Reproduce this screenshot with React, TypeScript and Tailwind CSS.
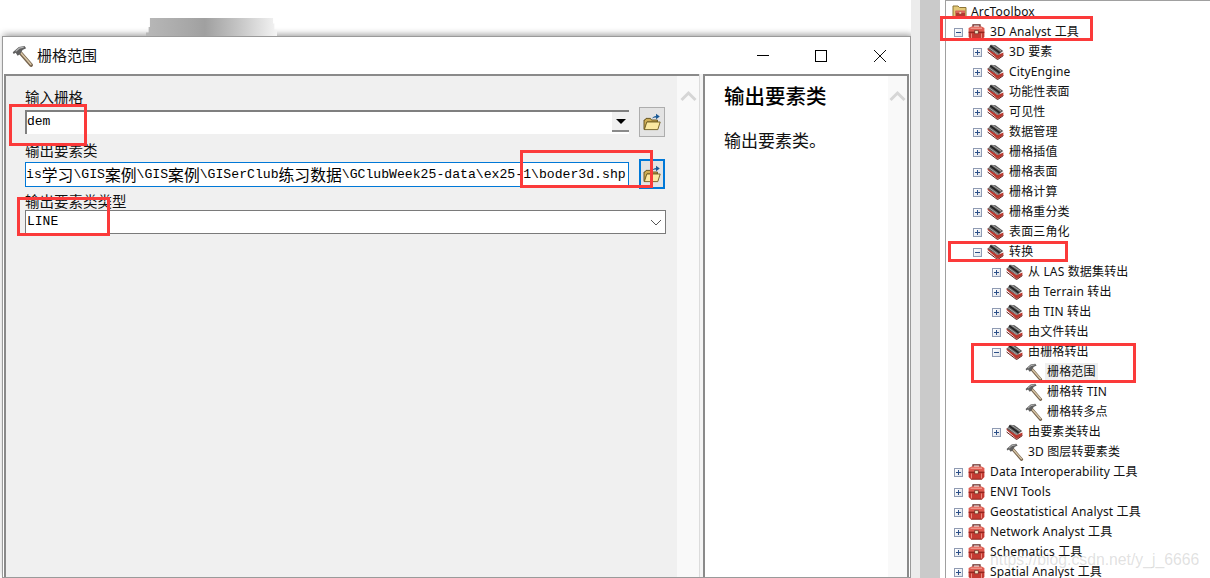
import React from "react";

const CJK = '"Noto Sans CJK SC", sans-serif';

function Hammer({ size = 18 }: { size?: number }) {
  return (
    <svg width={size} height={size} viewBox="0 0 18 18" className="shrink-0">
      <path d="M7 6.5 L15.6 16.4" stroke="#77644e" strokeWidth="3" strokeLinecap="round" />
      <path d="M7 6.2 L15.4 15.8" stroke="#d8c6a6" strokeWidth="1.3" strokeLinecap="round" />
      <path d="M0.6 6 L5.6 1.6 L10.2 0.8 L11.6 2.6 L8.6 4 L6.8 7.4 L4.6 8.8 L3 6.4 L1.4 7.4 Z" fill="#5f5f5f" />
      <path d="M3 5.2 L6 2.6 L9.6 1.8" stroke="#b4b4b4" strokeWidth="1" fill="none" />
    </svg>
  );
}

function RedBox() {
  return (
    <svg width="17" height="16" viewBox="0 0 17 16" className="shrink-0">
      <path d="M5 3.5 V0.8 H12 V3.5" fill="none" stroke="#6a2b26" strokeWidth="1.3" />
      <path d="M0.6 4 L3.6 2.6 H13.6 L16.4 4 V8 H0.6 Z" fill="#de5a4f" />
      <path d="M0.6 8 H16.4 V13 L14 15.4 H3 L0.6 13 Z" fill="#c43a32" />
      <path d="M0.6 8.2 H16.4" stroke="#7d1f1a" strokeWidth="1" />
      <path d="M2.6 4.2 H14" stroke="#f5b0a6" strokeWidth="1" />
      <rect x="6.8" y="6.4" width="3.4" height="3.4" fill="#f1e2bf" stroke="#5e2420" strokeWidth="0.6" />
      <path d="M3.5 9.5 V14.6 M13.5 9.5 V14.6" stroke="#e88a7f" strokeWidth="1" />
      <path d="M3 15.2 H14" stroke="#7d2a25" strokeWidth="0.8" />
    </svg>
  );
}

function GrayBox() {
  return (
    <svg width="17" height="16" viewBox="0 0 17 16" className="shrink-0">
      <path d="M0.6 6 L10.6 15 L16.4 11.2 V8.4 L10.6 11 L0.6 4 Z" fill="#b9382f" />
      <path d="M0.6 8 L10.6 15.6 L16.4 11.6" fill="none" stroke="#5f1a16" strokeWidth="1" />
      <path d="M0.8 5 L3.8 0.8 L8.5 1.2 L16.2 7 L11 11 Z" fill="#5a5a5a" />
      <path d="M3.2 1.8 L12.6 8.8" stroke="#1e1e1e" strokeWidth="1.4" />
      <path d="M1.8 3.6 L10.8 10 M5.4 1.2 L14 7" stroke="#c8c8c8" strokeWidth="0.7" />
    </svg>
  );
}

function RootBox() {
  return (
    <svg width="16" height="16" viewBox="0 0 16 16" className="shrink-0">
      <path d="M1 2 H6 L7.5 3.5 H14 V14 H1 Z" fill="#e3c877" stroke="#8c7434" strokeWidth="1" />
      <path d="M3.5 7 H13 V13 H3.5 Z" fill="#b03a30" />
      <path d="M3.5 6.5 H13 V9 H3.5 Z" fill="#d8665a" />
      <rect x="7.4" y="8" width="1.8" height="1.8" fill="#eadbb7" />
    </svg>
  );
}

function Folder() {
  return (
    <svg width="18" height="18" viewBox="0 0 18 18">
      <path d="M1 7 H2 L3 5.4 H7.5 L8.5 7 H14.4 V9 H4 L1.8 16.4 H1 Z" fill="#cfae56" stroke="#5e4d18" strokeWidth="0.9" />
      <path d="M3.8 9 H17.2 L14.8 16.6 H1.4 Z" fill="#fbe9a2" stroke="#6e5b1e" strokeWidth="0.9" />
      <path d="M9 5.8 C10 3.8 11.2 3 13 3 V0.8 L16.8 3.6 L13 6.2 V4.6 C11.6 4.6 10.4 4.8 9 5.8 Z" fill="#1b5a96" />
    </svg>
  );
}

function Expander({ open }: { open: boolean }) {
  return (
    <span className="relative block h-[9px] w-[9px] shrink-0 border border-[#8f9bb3] bg-[linear-gradient(135deg,#ffffff,#dfe3ea)]">
      <span className="absolute left-[1px] top-[3px] h-[1px] w-[5px] bg-[#2b4f88]" />
      {!open && <span className="absolute left-[3px] top-[1px] h-[5px] w-[1px] bg-[#2b4f88]" />}
    </span>
  );
}

type Kind = "root" | "red" | "gray" | "hammer";
type Node = { t: string; lvl: number; kind: Kind; open?: boolean; leaf?: boolean; sel?: boolean };

const nodes: Node[] = [
  { t: "ArcToolbox", lvl: 0, kind: "root", leaf: true },
  { t: "3D Analyst 工具", lvl: 1, kind: "red", open: true },
  { t: "3D 要素", lvl: 2, kind: "gray" },
  { t: "CityEngine", lvl: 2, kind: "gray" },
  { t: "功能性表面", lvl: 2, kind: "gray" },
  { t: "可见性", lvl: 2, kind: "gray" },
  { t: "数据管理", lvl: 2, kind: "gray" },
  { t: "栅格插值", lvl: 2, kind: "gray" },
  { t: "栅格表面", lvl: 2, kind: "gray" },
  { t: "栅格计算", lvl: 2, kind: "gray" },
  { t: "栅格重分类", lvl: 2, kind: "gray" },
  { t: "表面三角化", lvl: 2, kind: "gray" },
  { t: "转换", lvl: 2, kind: "gray", open: true },
  { t: "从 LAS 数据集转出", lvl: 3, kind: "gray" },
  { t: "由 Terrain 转出", lvl: 3, kind: "gray" },
  { t: "由 TIN 转出", lvl: 3, kind: "gray" },
  { t: "由文件转出", lvl: 3, kind: "gray" },
  { t: "由栅格转出", lvl: 3, kind: "gray", open: true },
  { t: "栅格范围", lvl: 4, kind: "hammer", leaf: true, sel: true },
  { t: "栅格转 TIN", lvl: 4, kind: "hammer", leaf: true },
  { t: "栅格转多点", lvl: 4, kind: "hammer", leaf: true },
  { t: "由要素类转出", lvl: 3, kind: "gray" },
  { t: "3D 图层转要素类", lvl: 3, kind: "hammer", leaf: true },
  { t: "Data Interoperability 工具", lvl: 1, kind: "red" },
  { t: "ENVI Tools", lvl: 1, kind: "red" },
  { t: "Geostatistical Analyst 工具", lvl: 1, kind: "red" },
  { t: "Network Analyst 工具", lvl: 1, kind: "red" },
  { t: "Schematics 工具", lvl: 1, kind: "red" },
  { t: "Spatial Analyst 工具", lvl: 1, kind: "red" },
];

const indent: Record<number, string> = {
  0: "pl-[5px]",
  1: "pl-[8px]",
  2: "pl-[27px]",
  3: "pl-[46px]",
  4: "pl-[74px]",
};

function Row({ n }: { n: Node }) {
  return (
    <div className={`flex h-[20px] shrink-0 items-center ${indent[n.lvl]}`}>
      {!n.leaf && <Expander open={!!n.open} />}
      {n.leaf && n.lvl === 3 && <span className="w-[9px] shrink-0" />}
      <span className={`flex w-[17px] shrink-0 justify-center ${n.lvl === 0 ? "" : "ml-[5px]"}`}>
        {n.kind === "root" && <RootBox />}
        {n.kind === "red" && <RedBox />}
        {n.kind === "gray" && <GrayBox />}
        {n.kind === "hammer" && <Hammer />}
      </span>
      <span className={`${n.lvl === 0 ? "ml-[1px]" : "ml-[3px]"} whitespace-nowrap px-[2px] text-[12px] leading-[18px] tracking-[0.15px] text-[#111] ${n.sel ? "bg-[#f0f0f0]" : ""}`}>
        {n.t}
      </span>
    </div>
  );
}

function Red({ c }: { c: string }) {
  return <div className={`absolute border-[3px] border-[#fb3a3a] ${c}`} />;
}

function Chevron() {
  return (
    <svg width="17" height="12" viewBox="0 0 17 12">
      <path d="M1.5 10 L8.5 3 L15.5 10" fill="none" stroke="#d6d6d6" strokeWidth="3" />
    </svg>
  );
}

export default function App() {
  return (
    <div
      className="relative flex h-[578px] w-[1210px] overflow-hidden bg-white"
      style={{ fontFamily: `"Noto Sans", ${CJK}` }}
    >
      {/* left: desktop strip and tool dialog */}
      <div className="flex w-[911px] shrink-0 flex-col pl-[2px]">
        <div className="h-[36px] shrink-0 pl-[144px] pt-[18px]">
          <div className="h-[18px] w-[131px] bg-[linear-gradient(90deg,#b8b8b8,#a6a6a6_35%,#a0a0a0_45%,#c4c4c4_70%,#e4e4e4_90%,#f4f4f4)] [clip-path:polygon(3%_0,97%_0,97%_30%,98%_30%,98%_65%,100%_65%,100%_100%,0_100%,0_80%,2%_80%,2%_50%,3%_50%)]" />
        </div>
        <div className="flex min-h-0 flex-1 flex-col border border-[#9a9a9a] bg-white shadow-[0_-3px_6px_rgba(0,0,0,0.18),4px_0_6px_rgba(0,0,0,0.25)]">
          {/* title bar */}
          <div className="flex h-[37px] shrink-0 items-center pl-[9px]">
            <Hammer size={22} />
            <span className="ml-[3px] text-[15px] text-[#111]" style={{ fontFamily: CJK }}>栅格范围</span>
            <div className="ml-auto flex items-center pr-[24px]">
              <span className="mr-[46px] block h-[1px] w-[12px] bg-black" />
              <span className="mr-[47px] block h-[12px] w-[12px] border border-black" />
              <svg width="12" height="12" viewBox="0 0 12 12">
                <path d="M0 0 L12 12 M12 0 L0 12" stroke="#111" strokeWidth="1" />
              </svg>
            </div>
          </div>
          {/* body */}
          <div className="flex min-h-0 flex-1 pl-[1px] pr-[1px]">
            {/* parameters */}
            <div className="flex w-[695px] shrink-0 border-l-2 border-t-2 border-[#8a8a8a] bg-[#f0f0f0]">
              <div className="flex w-[671px] shrink-0 flex-col pl-[19px] text-[14.5px] leading-[18px] text-[#111]" style={{ fontFamily: CJK }}>
                <div className="mt-[12px]">输入栅格</div>
                <div className="mt-[3px] flex items-start">
                  <div className="mt-[1px] flex h-[24px] w-[604px] items-start border-l-2 border-t-2 border-[#7f7f7f] bg-white">
                    <span className="font-['Liberation_Mono'] text-[13px] leading-[20px] text-black">dem</span>
                    <div className="ml-auto flex h-[20px] w-[17px] items-center justify-center border-b-2 border-[#8a8a8a] bg-[#f0f0f0]">
                      <span className="block h-0 w-0 border-x-[5px] border-t-[5px] border-x-transparent border-t-black" />
                    </div>
                  </div>
                  <div className="ml-[10px] mt-[-2px] flex h-[30px] w-[26px] items-center justify-center border border-[#adadad] bg-[#e3e3e3]">
                    <Folder />
                  </div>
                </div>
                <div className="mt-[4px]">输出要素类</div>
                <div className="mt-[3px] flex items-start">
                  <div className="flex h-[25px] w-[604px] items-center overflow-hidden whitespace-nowrap border border-[#0078d7] bg-white font-['Liberation_Mono'] text-[13.15px] text-black">
                    is<span className="text-[15.8px]" style={{ fontFamily: CJK }}>学习</span>\GIS<span className="text-[15.8px]" style={{ fontFamily: CJK }}>案例</span>\GIS<span className="text-[15.8px]" style={{ fontFamily: CJK }}>案例</span>\GISerClub<span className="text-[15.8px]" style={{ fontFamily: CJK }}>练习数据</span>\GClubWeek25-data\ex25-1\boder3d.shp
                  </div>
                  <div className="ml-[10px] mt-[-3px] flex h-[30px] w-[26px] items-center justify-center border-2 border-[#0078d7] bg-[#e3e3e3]">
                    <Folder />
                  </div>
                </div>
                <div className="mt-[3px]">输出要素类类型</div>
                <div className="flex h-[24px] w-[641px] items-center border border-[#7a7a7a] bg-white pl-[1px] font-['Liberation_Mono'] text-[13px] text-black">
                  LINE
                  <svg width="12" height="7" viewBox="0 0 12 7" className="ml-auto mr-[3px]">
                    <path d="M1 1 L6 6 L11 1" fill="none" stroke="#555" strokeWidth="1" />
                  </svg>
                </div>
              </div>
              <div className="flex w-[22px] shrink-0 justify-center bg-[#f9f9f9] pt-[14px]">
                <Chevron />
              </div>
            </div>
            {/* gap */}
            <div className="w-[4px] shrink-0 border-l border-[#dcdcdc] bg-[#f4f4f4]" />
            {/* help */}
            <div className="flex min-w-0 flex-1 border-l-2 border-t-2 border-[#8a8a8a] bg-white" style={{ fontFamily: CJK }}>
              <div className="flex-1 pl-[19px]">
                <div className="mt-[4px] text-[20.5px] font-medium leading-[30px] text-black">输出要素类</div>
                <div className="mt-[18px] text-[17px] leading-[24px] text-[#111]">输出要素类。</div>
              </div>
              <div className="flex w-[21px] shrink-0 justify-center border-r-2 border-[#8a8a8a] bg-[#f9f9f9] pt-[14px]">
                <Chevron />
              </div>
            </div>
          </div>
        </div>
      </div>

      {/* band between the dialog and the catalog */}
      <div className="flex w-[34px] shrink-0">
        <div className="w-[9px] bg-[#ececec]" />
        <div className="w-[20px] bg-[#cacaca]" />
        <div className="w-[5px] bg-white" />
      </div>

      {/* toolbox tree */}
      <div className="flex min-w-0 flex-1 flex-col overflow-hidden border-l border-t border-[#a0a0a0] bg-white pt-[1px]">
        {nodes.map((n) => (
          <Row key={n.t} n={n} />
        ))}
      </div>

      {/* annotations */}
      <Red c="left-[9px] top-[104px] h-[42px] w-[78px]" />
      <Red c="left-[17px] top-[197px] h-[39px] w-[93px]" />
      <Red c="left-[520px] top-[150px] h-[38px] w-[133px]" />
      <Red c="left-[940px] top-[16px] h-[25px] w-[153px]" />
      <Red c="left-[948px] top-[241px] h-[21px] w-[120px]" />
      <Red c="left-[971px] top-[343px] h-[40px] w-[165px]" />

      {/* watermark */}
      <div className="absolute left-[990px] top-[550px] whitespace-nowrap font-['Liberation_Sans'] text-[15.75px] leading-[20px] text-[#999]/30">
        https://blog.csdn.net/y_j_6666
      </div>
    </div>
  );
}
